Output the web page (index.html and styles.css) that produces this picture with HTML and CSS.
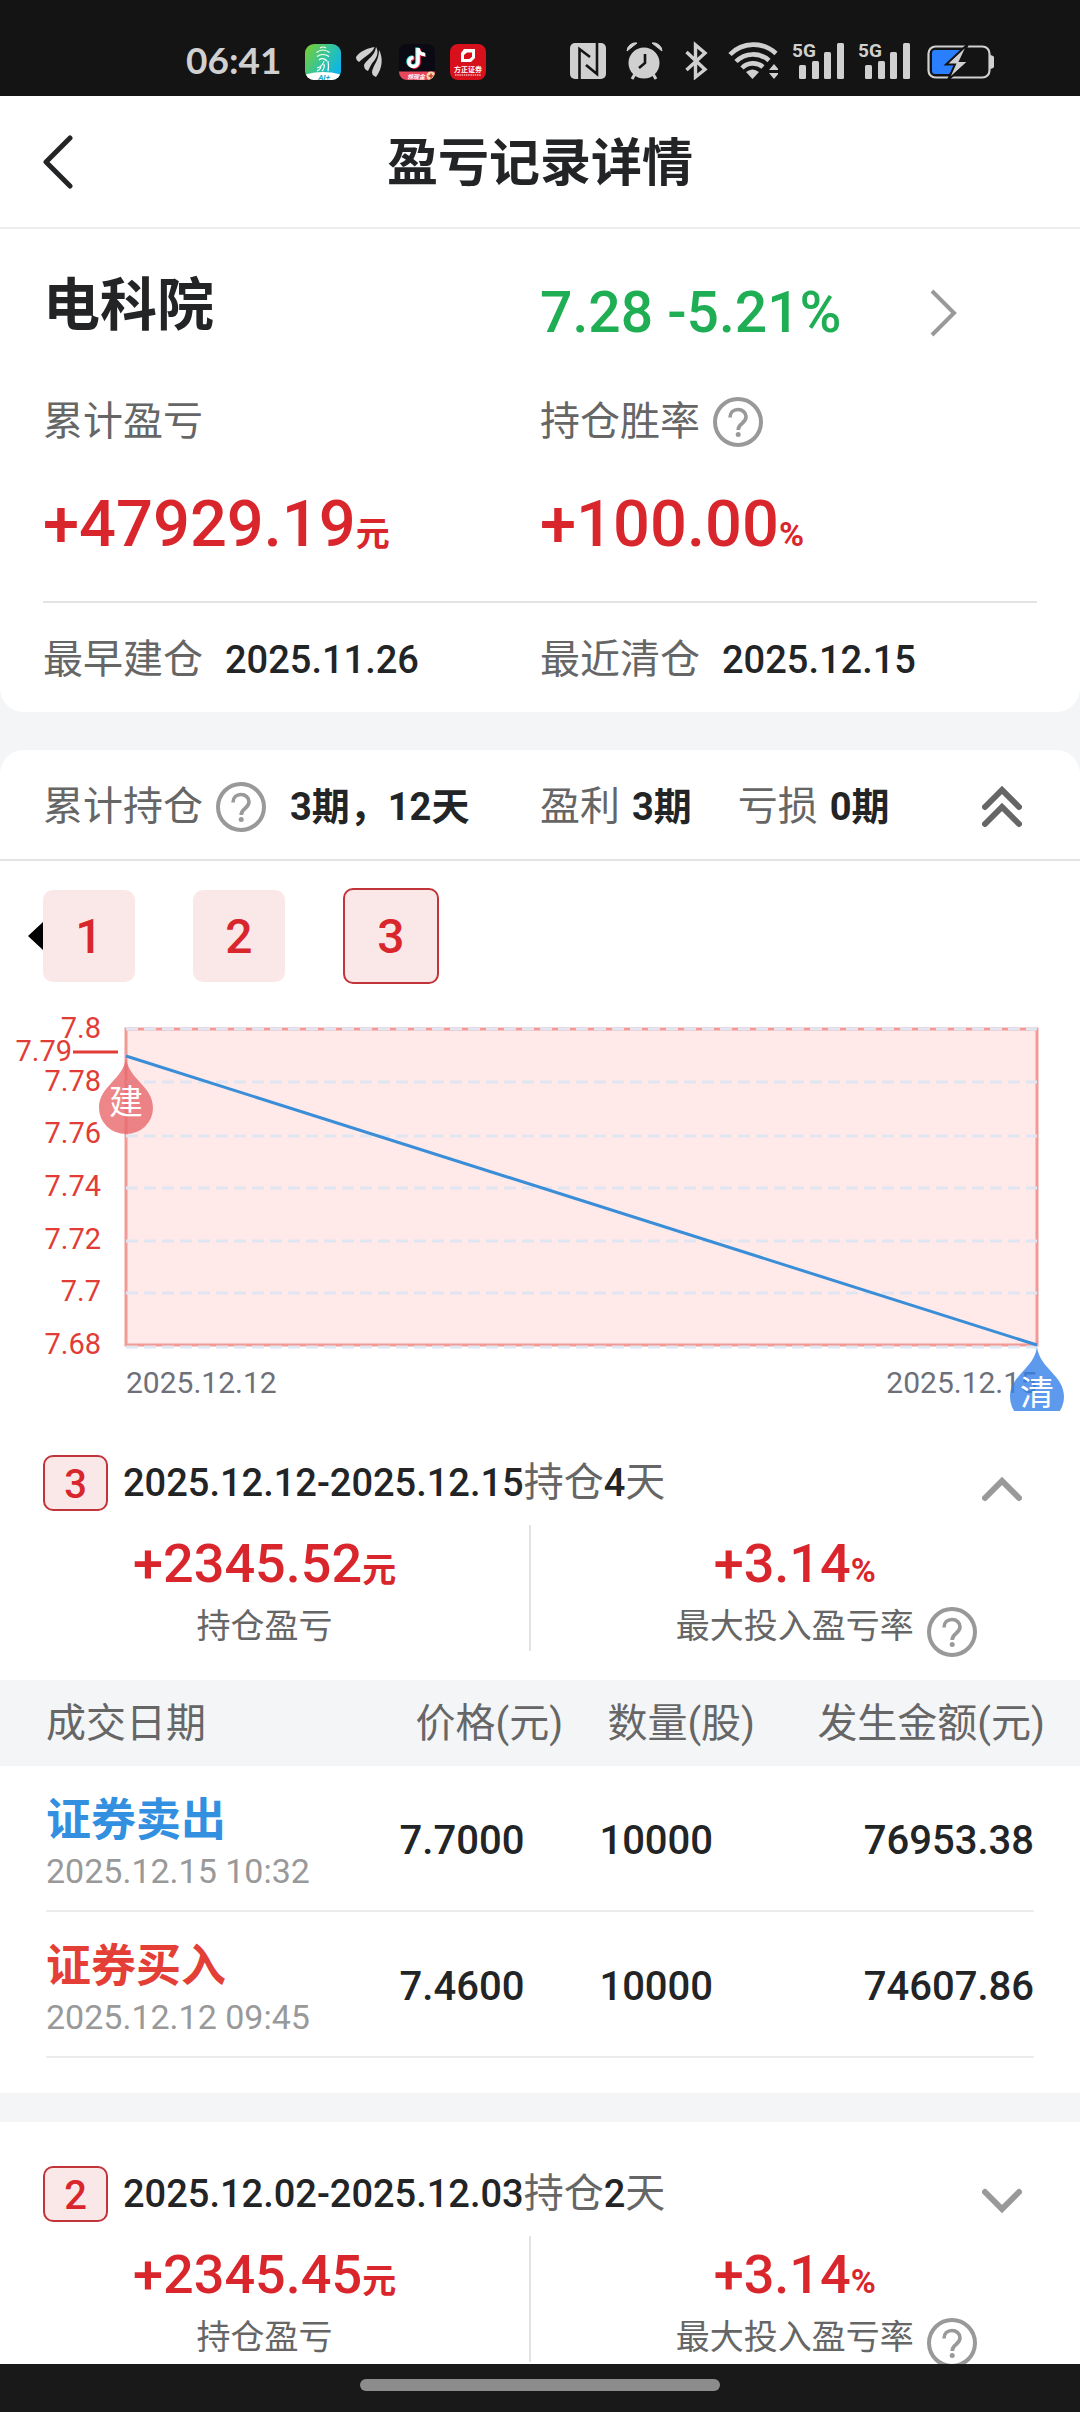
FILE: index.html
```html
<!DOCTYPE html>
<html lang="zh-CN">
<head>
    <meta charset="UTF-8">
    <meta name="viewport" content="width=device-width, initial-scale=1.0">
    <title>盈亏记录详情</title>
    <link rel="stylesheet" href="styles.css">
</head>
<body>

<!-- shared icons -->
<svg class="sprite" aria-hidden="true">
    <symbol id="icon-help" viewBox="0 0 50 50">
        <circle cx="25" cy="25" r="23" fill="none" stroke="#999" stroke-width="4"/>
        <path d="M17 20.500c0-5 3.500-8 8-8s8 3 8 7.300c0 3-1.500 4.700-4 6.700-2.700 2-3.800 3.500-3.800 6.500" fill="none" stroke="#999" stroke-width="3.600"/>
        <circle cx="25.200" cy="37.500" r="2.500" fill="#999"/>
    </symbol>
    <symbol id="icon-up" viewBox="0 0 40 26">
        <path d="M3 21L20 4l17 17" fill="none" stroke="#999" stroke-width="6" stroke-linecap="round"/>
    </symbol>
    <symbol id="icon-down" viewBox="0 0 40 26">
        <path d="M3 4l17 17L37 4" fill="none" stroke="#999" stroke-width="6" stroke-linecap="round"/>
    </symbol>
    <symbol id="icon-signal" viewBox="0 0 52 40">
        <text x="0" y="17" font-family="Roboto, sans-serif" font-weight="700" font-size="19" fill="#d0d0d0">5G</text>
        <rect x="7" y="25" width="7" height="14" rx="1.500" fill="#d0d0d0"/>
        <rect x="20" y="21" width="7" height="18" rx="1.500" fill="#d0d0d0"/>
        <rect x="32" y="12" width="7" height="27" rx="1.500" fill="#d0d0d0"/>
        <rect x="45" y="3" width="7" height="36" rx="1.500" fill="#d0d0d0"/>
    </symbol>
</svg>

<div class="status-bar">
    <span class="clock">06:41</span>
    <div class="apps">
        <svg width="36" height="36" viewBox="0 0 36 36">
            <defs>
                <linearGradient id="g1" x1="0" y1="0" x2="1" y2="0.6">
                    <stop offset="0" stop-color="#7fce2b"/>
                    <stop offset="0.550" stop-color="#35c59a"/>
                    <stop offset="1" stop-color="#0fb4e8"/>
                </linearGradient>
                <clipPath id="c1"><rect width="36" height="36" rx="9"/></clipPath>
            </defs>
            <g clip-path="url(#c1)">
                <rect width="36" height="36" fill="url(#g1)"/>
                <path d="M15 4q3-2 6 0M11.500 8.500q6.500-5 13 0M12 12.500q6-4 12 0M14 16q4-3 8 1M19 17q-1 5-7 7M23 17q1 6 0 10M19 20q1 4-2 7M16 23q-1 3-4 4" fill="none" stroke="#fff" stroke-width="1.200"/>
                <ellipse cx="18" cy="35" rx="22" ry="7" fill="#fff"/>
                <text x="19" y="35.500" text-anchor="middle" font-family="Roboto, sans-serif" font-weight="700" font-style="italic" font-size="8" fill="#1fa6c9">AI+</text>
            </g>
        </svg>
        <svg width="28" height="32" viewBox="0 0 28 32">
            <path d="M0 11C4 5 12 2 18.500 1 17 7 9 10 3 16 1 15 0 13 0 11z" fill="#d0d0d0"/>
            <path d="M8 19C11 13 19 10 20 1c3 5 1 10-2 14-3 3-4 6-6 10-3-1-4-3-4-6z" fill="#d0d0d0"/>
            <path d="M16 26c1-7 7-11 7-22 4 7 4 18-3 27-3-1-4-3-4-5z" fill="#d0d0d0"/>
        </svg>
        <svg width="36" height="36" viewBox="0 0 36 36">
            <clipPath id="c2"><rect width="36" height="36" rx="8"/></clipPath>
            <g clip-path="url(#c2)">
                <rect width="36" height="36" fill="#0a0a14"/>
                <path d="M19 4v14a4.500 4.500 0 1 1-4.500-4.500M19 4c0 4 3 6.500 7 6.500" transform="translate(-1 -0.5)" fill="none" stroke="#25f4ee" stroke-width="3.500"/>
                <path d="M19 4v14a4.500 4.500 0 1 1-4.500-4.500M19 4c0 4 3 6.500 7 6.500" transform="translate(1 0.700)" fill="none" stroke="#fe2c55" stroke-width="3.500"/>
                <path d="M19 4v14a4.500 4.500 0 1 1-4.500-4.500M19 4c0 4 3 6.500 7 6.500" fill="none" stroke="#fff" stroke-width="3.500"/>
                <path d="M0 27.500h36V36H0z" fill="#e8475c"/>
                <circle cx="32" cy="32" r="4.500" fill="#f6d9a8"/>
                <path d="M32 29.500v5M29.500 32h5" stroke="#c2402f" stroke-width="1.500"/>
                <text x="17" y="34.500" text-anchor="middle" font-family="Noto Sans CJK SC, sans-serif" font-weight="700" font-style="italic" font-size="6" fill="#fff">领现金</text>
            </g>
        </svg>
        <svg width="36" height="36" viewBox="0 0 36 36">
            <rect width="36" height="36" rx="8" fill="#d8101c"/>
            <path d="M14 5h11v9l-4 4H11V9z" fill="#fff"/>
            <path d="M17 8.500h5v4l-2.500 2.500H14v-4z" fill="#d8101c"/>
            <text x="18" y="28" text-anchor="middle" font-family="Noto Sans CJK SC, sans-serif" font-weight="700" font-size="7" fill="#fff">方正证券</text>
            <path d="M5 31h26" stroke="#fff" stroke-width="1.200" stroke-dasharray="1.500 0.700"/>
        </svg>
    </div>
    <div class="system">
        <svg width="42" height="40" viewBox="0 0 42 40">
            <rect x="0" y="3" width="36" height="36" rx="5" fill="#d0d0d0"/>
            <path d="M9.500 39V9l10.500 8M27 3v31L16 25" fill="none" stroke="#141414" stroke-width="2.600"/>
        </svg>
        <svg width="38" height="40" viewBox="0 0 38 40">
            <circle cx="18" cy="23" r="15.500" fill="#d0d0d0"/>
            <path d="M1 11A8.500 8.500 0 0 1 11 3zM36 11A8.500 8.500 0 0 0 26 3z" fill="#d0d0d0" stroke="#d0d0d0" stroke-width="1"/>
            <path d="M9 34l-3 5M27 34l3 5" stroke="#d0d0d0" stroke-width="3"/>
            <path d="M19 14v9l-6 5" fill="none" stroke="#141414" stroke-width="2.600"/>
        </svg>
        <svg width="36" height="40" viewBox="0 0 36 40">
            <path d="M8.500 12L27 29.500 17.500 37V5L27 13 8.500 30" fill="none" stroke="#d0d0d0" stroke-width="3.400"/>
        </svg>
        <svg width="50" height="40" viewBox="0 0 50 40">
            <path d="M2 14.500a33 33 0 0 1 46-1M8 21.500a24 24 0 0 1 33-1M14 28a15.500 15.500 0 0 1 21-1" fill="none" stroke="#d0d0d0" stroke-width="4.600"/>
            <path d="M24.500 39l-6.500-7q6.500-5 13 0z" fill="#d0d0d0"/>
            <path d="M41 30h10l-5-6zM41 33h10l-5 6z" fill="#d0d0d0"/>
        </svg>
        <svg width="52" height="40"><use href="#icon-signal"/></svg>
        <svg width="52" height="40"><use href="#icon-signal"/></svg>
        <svg width="70" height="40" viewBox="0 0 70 40">
            <rect x="4.500" y="6.500" width="61" height="31" rx="7" fill="none" stroke="#d0d0d0" stroke-width="2.200"/>
            <path d="M66 16a5 6 0 0 1 0 12z" fill="#d0d0d0" stroke="#d0d0d0" stroke-width="2"/>
            <path d="M11 10h25l-9 22-2 2H11a3 3 0 0 1-3-3V13a3 3 0 0 1 3-3z" fill="#2a7fff"/>
            <path d="M44 4L22 24.500h9L24 40l21-19h-9z" fill="#d0d0d0" stroke="#141414" stroke-width="2"/>
        </svg>
    </div>
</div>

<header class="title-bar">
    <button class="back" aria-label="返回">
        <svg width="32" height="54" viewBox="0 0 32 54"><path d="M28 3L4 27l24 24" fill="none" stroke="#222426" stroke-width="5" stroke-linecap="round" stroke-linejoin="round"/></svg>
    </button>
    <h1>盈亏记录详情</h1>
</header>

<main>
    <section class="card overview">
        <div class="pair name-row">
            <h2>电科院</h2>
            <a class="quote" href="#">
                <span>7.28 -5.21%</span>
                <svg width="30" height="48" viewBox="0 0 30 48"><path d="M3 2l22 22L3 46" fill="none" stroke="#999" stroke-width="4"/></svg>
            </a>
        </div>
        <div class="pair label-row">
            <span>累计盈亏</span>
            <span class="with-help">持仓胜率<button class="help" aria-label="说明"><svg><use href="#icon-help"/></svg></button></span>
        </div>
        <div class="pair big-row">
            <span>+47929.19<small>元</small></span>
            <span>+100.00<small>%</small></span>
        </div>
        <div class="pair date-row">
            <span>最早建仓<b>2025.11.26</b></span>
            <span>最近清仓<b>2025.12.15</b></span>
        </div>
    </section>

    <section class="card periods">
        <div class="pair summary">
            <div class="with-help">累计持仓<button class="help" aria-label="说明"><svg><use href="#icon-help"/></svg></button><b>3期，12天</b></div>
            <div class="counts">
                <span>盈利<b>3期</b></span>
                <span>亏损<b>0期</b></span>
                <button class="collapse" aria-label="收起">
                    <svg width="40" height="42" viewBox="0 0 40 42"><path d="M3 21L20 4l17 17M3 38l17-17 17 17" fill="none" stroke="#666" stroke-width="6" stroke-linecap="round"/></svg>
                </button>
            </div>
        </div>

        <div class="tabs">
            <button class="tab">1</button>
            <button class="tab">2</button>
            <button class="tab active">3</button>
        </div>

        <svg class="chart" viewBox="0 0 1080 411">
            <rect x="126" y="29" width="911" height="316" fill="#ffe9e9" stroke="#f29a96" stroke-width="3"/>
            <g class="grid">
                <path d="M126 29h911M126 82h911M126 136h911M126 188h911M126 241h911M126 293h911M126 347h911"/>
            </g>
            <g class="axis-y">
                <text x="101" y="38">7.8</text>
                <text x="101" y="91">7.78</text>
                <text x="101" y="143">7.76</text>
                <text x="101" y="196">7.74</text>
                <text x="101" y="249">7.72</text>
                <text x="101" y="301">7.7</text>
                <text x="101" y="354">7.68</text>
                <text x="72" y="61">7.79</text>
            </g>
            <path d="M73 52h45" stroke="#e13c35" stroke-width="3"/>
            <g class="axis-x">
                <text x="126" y="393">2025.12.12</text>
                <text x="1037" y="393" text-anchor="end">2025.12.15</text>
            </g>
            <path d="M126 56L1037 345" stroke="#3a8ed8" stroke-width="3"/>
            <path class="drop open" d="M126 58c3 22 27 28 27 50a27 26 0 0 1-54 0c0-22 24-28 27-50z"/>
            <text class="drop-text" x="126" y="114">建</text>
            <path class="drop close" d="M1037 347c3 22 27 28 27 50a27 26 0 0 1-54 0c0-22 24-28 27-50z"/>
            <text class="drop-text" x="1037" y="405">清</text>
        </svg>

        <article class="period">
            <div class="period-head">
                <span class="badge">3</span>
                <p><b>2025.12.12-2025.12.15</b>持仓<b>4</b>天</p>
                <button class="toggle" aria-label="收起"><svg><use href="#icon-up"/></svg></button>
            </div>
            <div class="stats">
                <div class="stat">
                    <strong>+2345.52<small>元</small></strong>
                    <span>持仓盈亏</span>
                </div>
                <div class="stat">
                    <strong>+3.14<small>%</small></strong>
                    <span>最大投入盈亏率<button class="help" aria-label="说明"><svg><use href="#icon-help"/></svg></button></span>
                </div>
            </div>
            <table>
                <thead>
                    <tr><th>成交日期</th><th>价格(元)</th><th>数量(股)</th><th>发生金额(元)</th></tr>
                </thead>
                <tbody>
                    <tr>
                        <td><span class="sell">证券卖出</span><time>2025.12.15 10:32</time></td>
                        <td>7.7000</td>
                        <td>10000</td>
                        <td>76953.38</td>
                    </tr>
                    <tr>
                        <td><span class="buy">证券买入</span><time>2025.12.12 09:45</time></td>
                        <td>7.4600</td>
                        <td>10000</td>
                        <td>74607.86</td>
                    </tr>
                </tbody>
            </table>
        </article>

        <article class="period">
            <div class="period-head">
                <span class="badge">2</span>
                <p><b>2025.12.02-2025.12.03</b>持仓<b>2</b>天</p>
                <button class="toggle" aria-label="展开"><svg><use href="#icon-down"/></svg></button>
            </div>
            <div class="stats">
                <div class="stat">
                    <strong>+2345.45<small>元</small></strong>
                    <span>持仓盈亏</span>
                </div>
                <div class="stat">
                    <strong>+3.14<small>%</small></strong>
                    <span>最大投入盈亏率<button class="help" aria-label="说明"><svg><use href="#icon-help"/></svg></button></span>
                </div>
            </div>
        </article>
    </section>
</main>

<div class="nav-bar"><div class="handle"></div></div>

</body>
</html>
```
FILE: styles.css
```css
* {
    box-sizing: border-box;
}
body {
    margin: 0;
    height: 100vh;
    display: flex;
    flex-direction: column;
    background-color: #f3f5f7;
    color: #666;
    font-family: Roboto, "Noto Sans CJK SC", sans-serif;
    font-size: 40px;
}
h1, h2, p {
    margin: 0;
}
svg {
    display: block;
    flex: none;
}
button {
    padding: 0;
    border: none;
    background: none;
    font: inherit;
    color: inherit;
    cursor: pointer;
}
b {
    color: #222426;
    font-weight: 500;
    font-size: 38px;
    line-height: 1;
}
small {
    font-size: 34px;
    font-weight: 700;
    line-height: 1;
}
.sprite {
    display: none;
}

/* status bar */
.status-bar {
    flex: none;
    height: 96px;
    padding: 24px 86px 0 186px;
    display: flex;
    align-items: center;
    background-color: #141414;
    color: #d0d0d0;
}
.clock {
    font-family: Lato, sans-serif;
    font-weight: 700;
    font-size: 37px;
    line-height: 48px;
}
.apps {
    display: flex;
    align-items: center;
    gap: 15px;
    margin-left: 24px;
    padding-top: 4px;
}
.system {
    display: flex;
    gap: 14px;
    margin-left: auto;
}

/* title bar */
.title-bar {
    flex: none;
    position: relative;
    height: 133px;
    background-color: #fff;
    border-bottom: 2px solid #ececec;
    text-align: center;
}
.title-bar h1 {
    font-size: 51px;
    font-weight: 700;
    line-height: 136px;
    color: #222426;
}
.back {
    position: absolute;
    left: 42px;
    top: 39px;
}

main {
    flex: 1;
    min-height: 0;
    overflow-y: auto;
    scrollbar-width: none;
}
.card {
    background-color: #fff;
    border-radius: 24px;
}
.pair {
    display: grid;
    grid-template-columns: 1fr 1fr;
}
.with-help {
    display: flex;
    align-items: center;
}
.help {
    flex: none;
    width: 50px;
    height: 50px;
    margin-left: 13px;
}
.help svg {
    width: 50px;
    height: 50px;
}

/* overview */
.overview {
    padding: 2px 43px 0;
    border-radius: 0 0 24px 24px;
}
.name-row {
    line-height: 150px;
}
.name-row h2 {
    font-size: 57px;
    font-weight: 700;
    color: #222426;
}
.quote {
    display: flex;
    align-items: center;
    justify-content: space-between;
    padding: 14px 78px 0 0;
    line-height: 136px;
    font-size: 57px;
    font-weight: 500;
    color: #1fae54;
    text-decoration: none;
}
.label-row {
    line-height: 82px;
}
.big-row {
    line-height: 122px;
    padding-bottom: 16px;
    border-bottom: 2px solid #e3e4e5;
    font-size: 65px;
    font-weight: 500;
    color: #d9262c;
}
.date-row {
    padding-top: 4px;
    line-height: 105px;
}
.date-row b {
    margin-left: 22px;
}

/* periods */
.periods {
    margin-top: 38px;
}
.summary {
    padding: 4px 43px 0;
    line-height: 105px;
    border-bottom: 2px solid #e3e4e5;
}
.summary b {
    font-weight: 700;
}
.summary .with-help b {
    margin-left: 24px;
}
.counts {
    display: flex;
    align-items: center;
    gap: 46px;
}
.counts b {
    margin-left: 12px;
}
.collapse {
    margin-left: auto;
    margin-right: 15px;
}
.tabs {
    position: relative;
    display: flex;
    align-items: center;
    gap: 58px;
    height: 96px;
    margin: 27px 43px 16px;
}
.tabs::before {
    content: "";
    position: absolute;
    left: -15px;
    border: solid transparent;
    border-width: 14px 15px 14px 0;
    border-right-color: #000;
}
.tab {
    width: 92px;
    height: 92px;
    border-radius: 10px;
    background-color: #fae8e9;
    color: #d9262c;
    font-size: 48px;
    font-weight: 500;
}
.tab.active {
    width: 96px;
    height: 96px;
    border: 2px solid #c0343a;
}

/* chart */
.chart {
    width: 100%;
    height: auto;
}
.chart .grid {
    fill: none;
    stroke: #e0e6f1;
    stroke-width: 3;
    stroke-dasharray: 12 6;
}
.chart .axis-y {
    font-size: 29px;
    fill: #e13c35;
    text-anchor: end;
}
.chart .axis-x {
    font-size: 30px;
    fill: #6e7079;
}
.drop {
    fill-opacity: 0.8;
}
.drop.open {
    fill: #e7686c;
}
.drop.close {
    fill: #3481e8;
}
.drop-text {
    font-size: 34px;
    fill: #fff;
    text-anchor: middle;
}

/* one holding period */
.period {
    padding-top: 44px;
}
.period + .period {
    border-top: 29px solid #f3f5f7;
}
.period-head {
    display: flex;
    align-items: center;
    gap: 15px;
    padding: 0 58px 0 43px;
    line-height: 56px;
}
.badge {
    width: 65px;
    height: 56px;
    border: 2px solid #c0343a;
    border-radius: 10px;
    background-color: #fae8e9;
    color: #d9262c;
    font-weight: 500;
    line-height: 56px;
    text-align: center;
}
.toggle {
    margin-left: auto;
    padding-top: 14px;
}
.toggle svg {
    width: 40px;
    height: 26px;
}
.stats {
    display: grid;
    grid-template-columns: 49% 49%;
    padding: 14px 0 29px;
}
.stat {
    height: 126px;
    text-align: center;
    font-size: 34px;
}
.stat + .stat {
    border-left: 2px solid #e3e3e3;
}
.stat strong {
    display: block;
    font-size: 54px;
    font-weight: 500;
    line-height: 78px;
    color: #d9262c;
}
.stat span {
    display: flex;
    justify-content: center;
    line-height: 46px;
}
.stat .help {
    margin: 4px -63px 0 13px;
}

table {
    width: 100%;
    table-layout: fixed;
    border-collapse: collapse;
    margin-bottom: 35px;
}
th {
    height: 86px;
    padding: 2px 0 0;
    background-color: #f3f5f7;
    font-weight: 400;
    line-height: 48px;
    text-align: left;
    white-space: nowrap;
}
th:nth-child(1) {
    width: 37%;
    padding-left: 46px;
}
th:nth-child(2) {
    width: 18.5%;
    padding-left: 16px;
}
th:nth-child(3) {
    width: 17%;
    padding-left: 8px;
}
th:nth-child(4) {
    padding-right: 35px;
    text-align: right;
}
tbody tr {
    height: 146px;
    background: linear-gradient(#ececec, #ececec) no-repeat center bottom / calc(100% - 92px) 2px;
}
td {
    padding: 2px 0 0;
    color: #222426;
    font-weight: 500;
}
td:first-child {
    padding: 8px 0 0 46px;
}
td:last-child {
    padding-right: 46px;
    text-align: right;
}
td span {
    display: block;
    font-size: 45px;
    font-weight: 700;
    line-height: 56px;
}
td time {
    display: block;
    font-size: 34px;
    font-weight: 400;
    line-height: 44px;
    color: #999;
}
.sell {
    color: #338fe0;
}
.buy {
    color: #e43f36;
}

/* gesture bar */
.nav-bar {
    flex: none;
    height: 48px;
    padding-top: 15px;
    background-color: #191919;
}
.handle {
    width: 33.333%;
    height: 12px;
    margin: 0 auto;
    border-radius: 6px;
    background-color: #8c8c8c;
}
```
